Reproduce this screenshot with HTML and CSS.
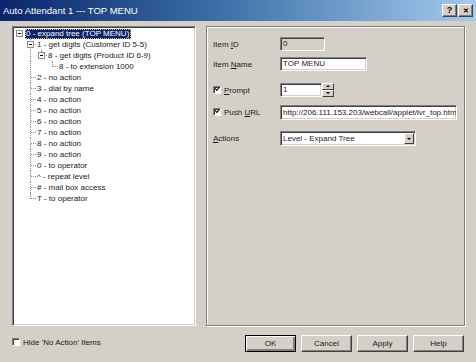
FILE: index.html
```html
<!DOCTYPE html>
<html>

<head>
    <meta http-equiv="content-type" content="text/html; charset=utf-8" />
    <title>Auto Attendant 1 --- TOP MENU</title>
    <link rel="stylesheet" href="styles.css">
</head>

<body>
    <div class="window">
        <div class="titlebar">
            <span class="title">Auto Attendant 1 --- TOP MENU</span>
            <span class="tb-btn">?</span>
            <span class="tb-btn close">&#x2715;</span>
        </div>

        <div class="main">
            <!-- дерево меню -->
            <div class="tree">
                <div class="node"><i class="g b"><span class="box"></span></i><span class="txt sel">0 - expand tree (TOP MENU)</span></div>
                <div class="node"><i class="g"></i><i class="g t"><span class="box"></span></i><span class="txt">1 - get digits (Customer ID 5-5)</span></div>
                <div class="node"><i class="g"></i><i class="g v"></i><i class="g l"><span class="box"></span></i><span class="txt">8 - get digits (Product ID 6-9)</span></div>
                <div class="node"><i class="g"></i><i class="g v"></i><i class="g"></i><i class="g l"></i><span class="txt">8 - to extension 1000</span></div>
                <div class="node"><i class="g"></i><i class="g t"></i><span class="txt">2 - no action</span></div>
                <div class="node"><i class="g"></i><i class="g t"></i><span class="txt">3 - dial by name</span></div>
                <div class="node"><i class="g"></i><i class="g t"></i><span class="txt">4 - no action</span></div>
                <div class="node"><i class="g"></i><i class="g t"></i><span class="txt">5 - no action</span></div>
                <div class="node"><i class="g"></i><i class="g t"></i><span class="txt">6 - no action</span></div>
                <div class="node"><i class="g"></i><i class="g t"></i><span class="txt">7 - no action</span></div>
                <div class="node"><i class="g"></i><i class="g t"></i><span class="txt">8 - no action</span></div>
                <div class="node"><i class="g"></i><i class="g t"></i><span class="txt">9 - no action</span></div>
                <div class="node"><i class="g"></i><i class="g t"></i><span class="txt">0 - to operator</span></div>
                <div class="node"><i class="g"></i><i class="g t"></i><span class="txt">^ - repeat level</span></div>
                <div class="node"><i class="g"></i><i class="g t"></i><span class="txt"># - mail box access</span></div>
                <div class="node"><i class="g"></i><i class="g l"></i><span class="txt">T - to operator</span></div>
            </div>

            <!-- свойства пункта -->
            <div class="props">
                <div class="row r-id">
                    <span class="lbl">Item <u>I</u>D</span>
                    <span class="field disabled w-id">0</span>
                </div>
                <div class="row r-name">
                    <span class="lbl">Item <u>N</u>ame</span>
                    <span class="field w-name">TOP MENU</span>
                </div>
                <div class="row r-prompt">
                    <span class="lbl"><span class="chk on"></span><u>P</u>rompt</span>
                    <span class="spin">
                        <span class="field w-spin">1</span>
                        <span class="spin-btns">
                            <span class="sb up"></span>
                            <span class="sb down"></span>
                        </span>
                    </span>
                </div>
                <div class="row r-url">
                    <span class="lbl"><span class="chk on"></span>Push <u>U</u>RL</span>
                    <span class="field w-url">http://206.111.153.203/webcall/applet/ivr_top.htm</span>
                </div>
                <div class="row r-act">
                    <span class="lbl"><u>A</u>ctions</span>
                    <span class="field combo w-combo">Level - Expand Tree<span class="drop"></span></span>
                </div>
            </div>
        </div>

        <div class="footer">
            <label class="hide"><span class="chk"></span>Hide 'No Action' Items</label>
            <div class="buttons">
                <span class="btn default">OK</span>
                <span class="btn">Cancel</span>
                <span class="btn">Apply</span>
                <span class="btn">Help</span>
            </div>
        </div>
    </div>
</body>

</html>
```

FILE: styles.css
```css
body {
    margin: 0;
    font-family: "Liberation Sans", Arial, sans-serif;
    font-size: 8px;
    color: #1a1a1a;
}

.window {
    width: 476px;
    height: 362px;
    background: #d4d0c8;
    overflow: hidden;
}

/* Title bar */
.titlebar {
    height: 21px;
    display: flex;
    align-items: center;
    padding: 0 3px 0 3px;
    background: linear-gradient(to right, #0a246a, #3a6ea5 45%, #a6caf0);
    color: #fff;
}

.title {
    flex: 1;
    font-size: 9.5px;
    padding-bottom: 1px;
}

.tb-btn {
    width: 13px;
    height: 11px;
    margin-left: 1px;
    background: #d4d0c8;
    border: 1px solid;
    border-color: #fff #404040 #404040 #fff;
    box-shadow: inset -1px -1px #808080;
    color: #000;
    font-weight: bold;
    font-size: 9px;
    line-height: 11px;
    text-align: center;
}

.tb-btn.close {
    font-size: 7px;
}

.main {
    display: grid;
    grid-template-columns: 184px 259px;
    gap: 10px;
    margin-top: 5px;
    padding: 0 11px 0 12px;
    height: 300px;
}

/* Tree */
.tree {
    background: #fff;
    border: 1px solid;
    border-color: #808080 #fff #fff #808080;
    box-shadow: inset 1px 1px #404040, inset -1px -1px #d4d0c8;
    padding: 1px 0 0 1px;
}

.node {
    display: flex;
    height: 11px;
    align-items: center;
    white-space: nowrap;
}

.g {
    flex: none;
    width: 11px;
    height: 11px;
    position: relative;
}

.g.v::before,
.g.t::before,
.g.l::before {
    content: "";
    position: absolute;
    left: 5px;
    top: 0;
    bottom: 0;
    border-left: 1px dotted #8c8c8c;
}

.g.l::before {
    bottom: 5px;
}

.g.t::after,
.g.l::after {
    content: "";
    position: absolute;
    left: 6px;
    top: 5px;
    width: 5px;
    border-top: 1px dotted #8c8c8c;
}

.box {
    position: absolute;
    left: 2px;
    top: 2px;
    width: 5px;
    height: 5px;
    background: #fff;
    border: 1px solid #8c8c8c;
    z-index: 1;
}

.box::before {
    content: "";
    position: absolute;
    left: 1px;
    top: 2px;
    width: 3px;
    height: 1px;
    background: #000;
}

.txt {
    padding: 0 2px 0 1px;
    line-height: 10px;
}

.txt.sel {
    background: #0a246a;
    color: #fff;
    outline: 1px dotted #d8c070;
    outline-offset: -1px;
}

/* Properties */
.props {
    border: 1px solid #808080;
    box-shadow: inset 1px 1px #fff, 1px 1px #fff;
    padding: 0 0 0 6px;
    display: flex;
    flex-direction: column;
}

.row {
    display: flex;
    align-items: center;
    height: 14px;
}

.r-id { margin-top: 10px; }
.r-name { margin-top: 6px; }
.r-prompt { margin-top: 12px; }
.r-url { margin-top: 8px; height: 15px; }
.r-act { margin-top: 11px; height: 15px; }

.lbl {
    width: 67px;
    flex: none;
    white-space: nowrap;
}

.field {
    box-sizing: border-box;
    height: 100%;
    background: #fff;
    border: 1px solid;
    border-color: #808080 #fff #fff #808080;
    box-shadow: inset 1px 1px #404040, inset -1px -1px #d4d0c8;
    padding: 0 2px;
    line-height: 12px;
    white-space: nowrap;
    overflow: hidden;
}

.field.disabled {
    background: #d4d0c8;
}

.w-id { width: 45px; }
.w-name { width: 87px; }
.w-spin { width: 42px; }
.w-url { width: 177px; line-height: 13px; }
.w-combo { width: 136px; line-height: 13px; }

.spin {
    display: flex;
    height: 100%;
}

.spin-btns {
    display: flex;
    flex-direction: column;
    width: 12px;
}

.sb {
    flex: 1;
    background: #d4d0c8;
    border: 1px solid;
    border-color: #fff #404040 #404040 #fff;
    position: relative;
}

.sb::before {
    content: "";
    position: absolute;
    left: 3px;
    top: 1px;
    border-left: 2px solid transparent;
    border-right: 2px solid transparent;
}

.sb.up::before {
    border-bottom: 2px solid #000;
}

.sb.down::before {
    border-top: 2px solid #000;
}

.combo {
    position: relative;
}

.drop {
    position: absolute;
    right: 1px;
    top: 1px;
    bottom: 1px;
    width: 10px;
    background: #d4d0c8;
    border: 1px solid;
    border-color: #fff #404040 #404040 #fff;
    box-sizing: border-box;
}

.drop::before {
    content: "";
    position: absolute;
    left: 2px;
    top: 4px;
    border-left: 2px solid transparent;
    border-right: 2px solid transparent;
    border-top: 2px solid #000;
}

.chk {
    display: inline-block;
    vertical-align: -1px;
    box-sizing: border-box;
    width: 8px;
    height: 8px;
    margin-right: 3px;
    background: #fff;
    border: 1px solid;
    border-color: #808080 #fff #fff #808080;
    box-shadow: inset 1px 1px #404040;
    position: relative;
}

.chk.on::before {
    content: "";
    position: absolute;
    left: 1px;
    top: 0px;
    width: 3px;
    height: 1.5px;
    border-left: 1.5px solid #000;
    border-bottom: 1.5px solid #000;
    transform: rotate(-45deg);
}

/* Footer */
.footer {
    display: flex;
    justify-content: space-between;
    align-items: center;
    padding: 9px 12px 0 12px;
}

.hide {
    margin-top: -2px;
    white-space: nowrap;
}

.buttons {
    display: flex;
    gap: 5px;
}

.btn {
    box-sizing: border-box;
    width: 51px;
    height: 17px;
    background: #d4d0c8;
    border: 1px solid;
    border-color: #fff #404040 #404040 #fff;
    box-shadow: inset -1px -1px #808080;
    text-align: center;
    line-height: 15px;
}

.btn.default {
    border-color: #000;
    box-shadow: inset 1px 1px #fff, inset -2px -2px #808080;
}
```
